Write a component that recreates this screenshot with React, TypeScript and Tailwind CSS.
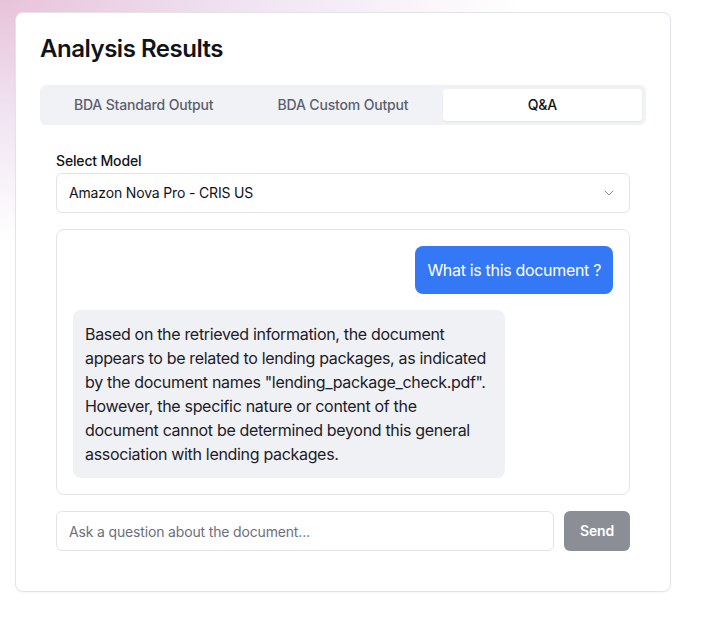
import { ChevronDown } from "lucide-react";

const tabs = ["BDA Standard Output", "BDA Custom Output", "Q&A"];

export default function App() {
    const active = 2;

    return (
        <div
            className="min-h-screen bg-white bg-[radial-gradient(ellipse_520px_240px_at_0%_0%,#e8c3d9_0%,#efe2f1_45%,#ffffff_100%)] pt-3 pl-[15px] tracking-[-0.01em]"
            style={{ fontFamily: "Inter, 'Noto Sans', sans-serif" }}
        >
            <div className="w-[656px] bg-white border border-[#e3e4e8] rounded-lg shadow-[0_1px_2px_rgba(0,0,0,0.04)] px-6 pt-6 pb-[40px]">
                <h2 className="text-2xl leading-6 font-semibold tracking-[-0.02em] text-[#111318] mb-6">Analysis Results</h2>

                <div className="grid grid-cols-3 bg-[#f1f2f5] rounded-md p-1 h-10">
                    {tabs.map((t, i) => (
                        <button
                            key={t}
                            className={
                                i === active
                                    ? "rounded-[4px] bg-white text-sm font-medium text-[#111318] shadow-[0_1px_2px_rgba(0,0,0,0.06)]"
                                    : "rounded-[4px] text-sm font-medium text-[#5b6070]"
                            }
                        >
                            {t}
                        </button>
                    ))}
                </div>

                <div className="px-4 pt-[26px]">
                    <label className="block text-sm font-medium text-[#111318] leading-5 mb-0.5">Select Model</label>
                    <div className="h-10 flex items-center justify-between border border-[#e3e4e8] rounded-md px-3 text-sm text-[#111318]">
                        <span>Amazon Nova Pro - CRIS US</span>
                        <ChevronDown className="w-4 h-4 text-[#8a8d94]" strokeWidth={1.5} />
                    </div>

                    <div className="mt-4 border border-[#e3e4e8] rounded-lg p-4 flex flex-col gap-4 tracking-[-0.02em]">
                        <div className="flex justify-end">
                            <div className="bg-[#3478f6] text-white text-base leading-6 px-3 py-3 rounded-lg max-w-[80%]">
                                What is this document ?
                            </div>
                        </div>
                        <div className="flex justify-start">
                            <div className="bg-[#f0f1f4] text-[#1d2029] text-base leading-6 px-3 py-3 rounded-lg max-w-[80%]">
                                Based on the retrieved information, the document appears to be related to lending packages, as
                                indicated by the document names "lending_package_check.pdf". However, the specific nature or
                                content of the document cannot be determined beyond this general association with lending
                                packages.
                            </div>
                        </div>
                    </div>

                    <div className="mt-4 flex gap-2.5">
                        <input
                            className="flex-1 h-10 border border-[#e3e4e8] rounded-md px-3 text-sm text-[#111318] placeholder:text-[#6b6f7b] outline-none"
                            placeholder="Ask a question about the document..."
                        />
                        <button className="h-10 px-4 rounded-md bg-[#8b8e95] text-white text-sm font-semibold">Send</button>
                    </div>
                </div>
            </div>
        </div>
    );
}
